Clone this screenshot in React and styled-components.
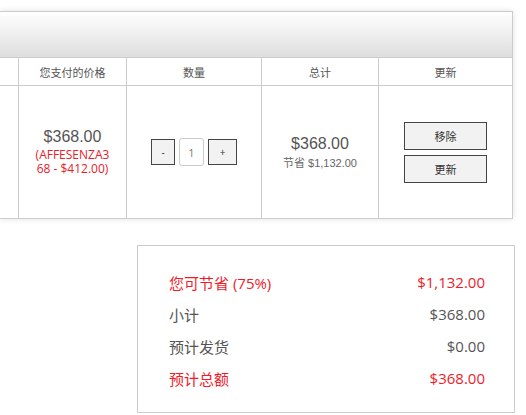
import React from "react";
import styled, { createGlobalStyle } from "styled-components";

const G = createGlobalStyle`
  body { margin: 0; background: #fff; font-family: "Open Sans", "Noto Sans CJK SC", sans-serif; color: #555; }
`;
const Page = styled.div`padding-top: 11px; width: 526px; height: 415px; overflow: hidden;`;
const Panel = styled.div`
  width: 512px; border: 1px solid #ccc; border-left: none;
  box-shadow: 0 0 6px rgba(0,0,0,0.12);
`;
const Head = styled.div`height: 45px; background: linear-gradient(#fff, #dedede); border-bottom: 1px solid #ccc;`;
const Row = styled.div`
  display: grid; grid-template-columns: 18px 108px 135px 117px 134px;
  height: ${p => p.h}px; border-bottom: ${p => p.last ? "none" : "1px solid #ccc"};
`;
const Cell = styled.div`
  border-left: ${p => p.first ? "none" : "1px solid #ccc"};
  display: flex; flex-direction: column; align-items: center; justify-content: center;
  font-size: ${p => p.fs || 11}px; color: #555; text-align: center;
`;
const Price = styled.div`font-family: "Liberation Sans", Arial, sans-serif; font-size: 16px; color: #555;`;
const Red = styled.div`color: #e8202a; font-size: 12px; line-height: 14px; width: 80px; word-break: break-all; margin-top: 2px;`;
const Sub = styled.div`font-size: 11px; color: #666; margin-top: 1px; font-family: "Liberation Sans", "Noto Sans CJK SC", sans-serif;`;
const Qty = styled.div`display: flex; align-items: center; gap: 4px;`;
const SmallBtn = styled.div`
  width: 24px; height: 26px; box-sizing: border-box; border: 1px solid #444; background: #f2f2f2;
  display: flex; align-items: center; justify-content: center; font-size: 10px; color: #333;
`;
const Input = styled.div`
  width: 25px; height: 28px; box-sizing: border-box; border: 1px solid #ccc; border-radius: 3px;
  display: flex; align-items: center; justify-content: center; font-size: 11px; color: #777;
`;
const Btn = styled.div`
  width: 83px; height: 28px; box-sizing: border-box; border: 1px solid #444; background: #f2f2f2;
  display: flex; align-items: center; justify-content: center; font-size: 11px; color: #333;
  & + & { margin-top: 5px; }
`;
const Summary = styled.div`
  margin: 26px 0 0 137px; width: 378px; height: 168px; box-sizing: border-box;
  border: 1px solid #ccc; padding: 20px 29px 0 31px; display: flex; flex-direction: column;
`;
const SRow = styled.div`
  display: flex; justify-content: space-between; height: 32px; align-items: center;
  font-size: 15px; color: ${p => p.red ? "#f01c2a" : "#555"};
`;

export default function App() {
  return (
    <Page>
      <G />
      <Panel>
        <Head />
        <Row h={27}>
          <Cell first />
          <Cell>您支付的价格</Cell>
          <Cell>数量</Cell>
          <Cell>总计</Cell>
          <Cell>更新</Cell>
        </Row>
        <Row h={132} last>
          <Cell first />
          <Cell>
            <Price>$368.00</Price>
            <Red>(AFFESENZA368 - $412.00)</Red>
          </Cell>
          <Cell>
            <Qty><SmallBtn>-</SmallBtn><Input>1</Input><SmallBtn style={{width: 29}}>+</SmallBtn></Qty>
          </Cell>
          <Cell>
            <Price>$368.00</Price>
            <Sub>节省 $1,132.00</Sub>
          </Cell>
          <Cell>
            <Btn>移除</Btn>
            <Btn>更新</Btn>
          </Cell>
        </Row>
      </Panel>
      <Summary>
        <SRow red><span>您可节省 (75%)</span><span>$1,132.00</span></SRow>
        <SRow><span>小计</span><span>$368.00</span></SRow>
        <SRow><span>预计发货</span><span>$0.00</span></SRow>
        <SRow red><span>预计总额</span><span>$368.00</span></SRow>
      </Summary>
    </Page>
  );
}
